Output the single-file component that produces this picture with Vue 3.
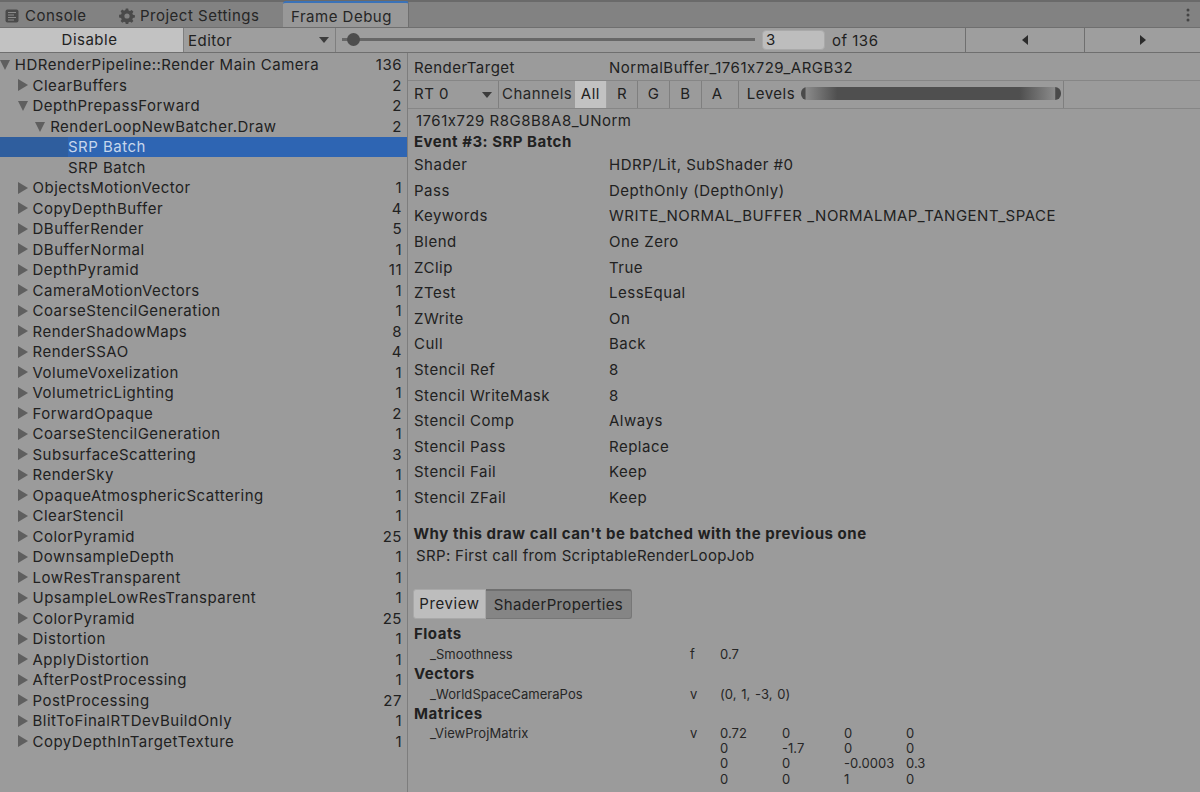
<template>
  <div class="window">
    <div class="tabbar">
      <div class="tab">
        <svg class="tab-icon" width="14" height="14" viewBox="0 0 14 14">
          <rect x="0.5" y="0.5" width="13" height="13" rx="2" fill="#4a4a4a" />
          <path d="M3 3.500h8M3 6h6M3 8.500h8M3 11h6" stroke="#8c8c8c" stroke-width="1" />
        </svg>
        Console
      </div>
      <div class="tab tab-settings">
        <svg class="tab-icon" width="16" height="16" viewBox="0 0 16 16">
          <path
            fill="#4a4a4a"
            fill-rule="evenodd"
            d="M6.800 0.500h2.400l.4 2 1.400.6 1.700-1.100 1.700 1.700-1.100 1.700.6 1.400 2 .4v2.400l-2 .4-.6 1.400 1.100 1.700-1.700 1.700-1.700-1.100-1.400.6-.4 2H6.800l-.4-2-1.400-.6-1.700 1.100-1.700-1.700 1.100-1.700-.6-1.400-2-.4V6.800l2-.4.6-1.400-1.100-1.700 1.700-1.700 1.700 1.100 1.400-.6zM8 5.400a2.600 2.600 0 1 0 0 5.200 2.600 2.600 0 0 0 0-5.200z"
          />
        </svg>
        Project Settings
      </div>
      <div class="tab tab-active">Frame Debug</div>
      <div class="tab-rest">
        <svg width="4" height="14" viewBox="0 0 4 14">
          <circle cx="2" cy="2" r="1.500" fill="#444" />
          <circle cx="2" cy="7" r="1.500" fill="#444" />
          <circle cx="2" cy="12" r="1.500" fill="#444" />
        </svg>
      </div>
    </div>

    <div class="toolbar">
      <div class="disable-btn">Disable</div>
      <div class="editor-select">Editor<span class="caret"></span></div>
      <div class="slider">
        <div class="slider-track"></div>
        <div class="slider-thumb"></div>
      </div>
      <div class="frame-input">3</div>
      <div class="frame-total">of 136</div>
      <div class="nav-btn"><span class="arrow-left"></span></div>
      <div class="nav-btn"><span class="arrow-right"></span></div>
    </div>

    <div class="main">
      <div class="tree">
        <div
          v-for="row in treeRows"
          :key="row.id"
          class="tree-row"
          :class="{ selected: row.selected }"
          :style="{ paddingLeft: row.depth * 17.7 + 14.8 + 'px' }"
        >
          <span v-if="row.selected" class="tree-gutter"></span>
          <span v-if="row.arrow" class="tree-arrow" :class="row.arrow"></span>
          <span class="tree-name">{{ row.name }}</span>
          <span class="tree-count">{{ row.count }}</span>
        </div>
      </div>

      <div class="details">
        <div class="target-row">
          <span class="target-label">RenderTarget</span>
          <span>NormalBuffer_1761x729_ARGB32</span>
        </div>
        <div class="channels">
          <div class="rt-select">RT 0<span class="caret"></span></div>
          <div class="channels-label">Channels</div>
          <div class="channel on">All</div>
          <div class="channel">R</div>
          <div class="channel">G</div>
          <div class="channel">B</div>
          <div class="channel channel-last">A</div>
          <div class="levels">
            <span>Levels</span>
            <div class="levels-bar"></div>
          </div>
        </div>
        <div class="format">1761x729 R8G8B8A8_UNorm</div>
        <div class="event-title">Event #3: SRP Batch</div>
        <div class="props">
          <div v-for="prop in props" :key="prop[0]" class="prop">
            <span class="prop-name">{{ prop[0] }}</span>
            <span>{{ prop[1] }}</span>
          </div>
        </div>
        <div class="why-title">Why this draw call can't be batched with the previous one</div>
        <div class="why-text">SRP: First call from ScriptableRenderLoopJob</div>

        <div class="segmented">
          <div class="segment seg-on">Preview</div>
          <div class="segment seg-off">ShaderProperties</div>
        </div>

        <div class="group-title">Floats</div>
        <div class="shader-row">
          <span class="sp-name">_Smoothness</span><span class="sp-type">f</span><span>0.7</span>
        </div>
        <div class="group-title">Vectors</div>
        <div class="shader-row">
          <span class="sp-name">_WorldSpaceCameraPos</span><span class="sp-type">v</span><span class="sp-vector">(0, 1, -3, 0)</span>
        </div>
        <div class="group-title">Matrices</div>
        <div class="shader-row matrix-row">
          <span class="sp-name">_ViewProjMatrix</span><span class="sp-type">v</span>
          <div class="matrix">
            <span v-for="(cell, i) in matrix" :key="i">{{ cell }}</span>
          </div>
        </div>
      </div>
    </div>
  </div>
</template>

<script setup>
const names = [
  ['ClearBuffers', 2],
  ['DepthPrepassForward', 2, 'open'],
  ['RenderLoopNewBatcher.Draw', 2, 'open', 2],
  ['SRP Batch', '', '', 3, true],
  ['SRP Batch', '', '', 3],
  ['ObjectsMotionVector', 1],
  ['CopyDepthBuffer', 4],
  ['DBufferRender', 5],
  ['DBufferNormal', 1],
  ['DepthPyramid', 11],
  ['CameraMotionVectors', 1],
  ['CoarseStencilGeneration', 1],
  ['RenderShadowMaps', 8],
  ['RenderSSAO', 4],
  ['VolumeVoxelization', 1],
  ['VolumetricLighting', 1],
  ['ForwardOpaque', 2],
  ['CoarseStencilGeneration', 1],
  ['SubsurfaceScattering', 3],
  ['RenderSky', 1],
  ['OpaqueAtmosphericScattering', 1],
  ['ClearStencil', 1],
  ['ColorPyramid', 25],
  ['DownsampleDepth', 1],
  ['LowResTransparent', 1],
  ['UpsampleLowResTransparent', 1],
  ['ColorPyramid', 25],
  ['Distortion', 1],
  ['ApplyDistortion', 1],
  ['AfterPostProcessing', 1],
  ['PostProcessing', 27],
  ['BlitToFinalRTDevBuildOnly', 1],
  ['CopyDepthInTargetTexture', 1],
]

const treeRows = [
  { id: 0, name: 'HDRenderPipeline::Render Main Camera', count: 136, arrow: 'open', depth: 0 },
  ...names.map((n, i) => ({
    id: i + 1,
    name: n[0],
    count: n[1],
    arrow: n[2] === '' ? '' : n[2] || 'closed',
    depth: n[3] || 1,
    selected: !!n[4],
  })),
]

const props = [
  ['Shader', 'HDRP/Lit, SubShader #0'],
  ['Pass', 'DepthOnly (DepthOnly)'],
  ['Keywords', 'WRITE_NORMAL_BUFFER _NORMALMAP_TANGENT_SPACE'],
  ['Blend', 'One Zero'],
  ['ZClip', 'True'],
  ['ZTest', 'LessEqual'],
  ['ZWrite', 'On'],
  ['Cull', 'Back'],
  ['Stencil Ref', '8'],
  ['Stencil WriteMask', '8'],
  ['Stencil Comp', 'Always'],
  ['Stencil Pass', 'Replace'],
  ['Stencil Fail', 'Keep'],
  ['Stencil ZFail', 'Keep'],
]

const matrix = [
  '0.72', '0', '0', '0',
  '0', '-1.7', '0', '0',
  '0', '0', '-0.0003', '0.3',
  '0', '0', '1', '0',
]
</script>

<style>
html,
body {
  margin: 0;
  background: #9b9b9b;
}
</style>

<style scoped>
.window {
  width: 1200px;
  height: 792px;
  overflow: hidden;
  background: #9b9b9b;
  color: #212121;
  font-family: Inter, "Liberation Sans", sans-serif;
  font-size: 15px;
  letter-spacing: 0.5px;
  display: flex;
  flex-direction: column;
}

.tabbar {
  height: 25px;
  flex: none;
  display: flex;
  background: #828282;
  border-top: 2px solid #6a6a6a;
  color: #262626;
}
.tab {
  display: flex;
  align-items: center;
  gap: 6px;
  padding: 2px 0 0 5px;
  width: 100px;
  box-sizing: border-box;
}
.tab-settings {
  width: 183px;
  padding-left: 19px;
  gap: 5px;
}
.tab-active {
  width: 126px;
  padding-left: 8px;
  background: #989898;
  border-top: 2px solid #3a72b8;
  border-right: 1px solid #6f6f6f;
  border-radius: 3px 3px 0 0;
  margin-top: -1px;
}
.tab-rest {
  flex: 1;
  display: flex;
  justify-content: flex-end;
  align-items: center;
  padding-right: 10px;
}

.toolbar {
  height: 26px;
  flex: none;
  display: flex;
  align-items: stretch;
  background: #9e9e9e;
  border-top: 1px solid #6f6f6f;
  border-bottom: 1px solid #6f6f6f;
  box-sizing: border-box;
}
.toolbar > div {
  flex: none;
}
.disable-btn {
  width: 183px;
  background: #c2c2c2;
  display: flex;
  align-items: center;
  justify-content: center;
  padding: 0 4px 1px 0;
  box-sizing: border-box;
}
.editor-select {
  width: 153px;
  position: relative;
  display: flex;
  align-items: center;
  padding-left: 4px;
  box-sizing: border-box;
  border-left: 1px solid #7f7f7f;
  border-right: 1px solid #7f7f7f;
}
.caret {
  position: absolute;
  right: 6px;
  top: 50%;
  margin-top: -3px;
  border-left: 5px solid transparent;
  border-right: 5px solid transparent;
  border-top: 6px solid #3c3c3c;
}
.slider {
  width: 419px;
  position: relative;
  margin-left: 6px;
}
.slider-track {
  position: absolute;
  left: 0;
  right: 6px;
  top: 50%;
  height: 3px;
  margin-top: -2px;
  background: #676767;
}
.slider-thumb {
  position: absolute;
  left: 5px;
  top: 50%;
  width: 13px;
  height: 13px;
  margin-top: -7px;
  border-radius: 50%;
  background: #4d4d4d;
}
.frame-input {
  width: 63px;
  height: 20px;
  align-self: center;
  margin-left: 1px;
  padding-left: 3px;
  box-sizing: border-box;
  background: #bdbdbd;
  border: 1px solid #a9a9a9;
  border-radius: 4px;
  line-height: 18px;
}
.frame-total {
  width: 140px;
  padding-left: 7px;
  box-sizing: border-box;
  display: flex;
  align-items: center;
}
.nav-btn {
  width: 118.500px;
  display: flex;
  align-items: center;
  justify-content: center;
  border-left: 1px solid #6f6f6f;
  box-sizing: border-box;
}
.arrow-left {
  border-top: 5px solid transparent;
  border-bottom: 5px solid transparent;
  border-right: 6px solid #2c2c2c;
}
.arrow-right {
  border-top: 5px solid transparent;
  border-bottom: 5px solid transparent;
  border-left: 6px solid #2c2c2c;
}

.main {
  flex: 1;
  display: flex;
  min-height: 0;
}
.tree {
  width: 407px;
  flex: none;
  padding-top: 1.500px;
  border-right: 1px solid #7d7d7d;
}
.tree-row {
  height: 20.500px;
  display: flex;
  align-items: center;
  position: relative;
  padding-right: 5px;
  line-height: 1;
}
.tree-row.selected {
  background: #2e65b3;
  color: #c6d6ec;
}
.tree-gutter {
  position: absolute;
  left: 0;
  top: 0;
  bottom: 0;
  width: 68px;
  background: #2f5e9e;
}
.tree-name {
  flex: 1;
  white-space: nowrap;
  position: relative;
}
.tree-count {
  text-align: right;
}
.tree-arrow {
  position: absolute;
}
.tree-arrow.closed {
  border-top: 6px solid transparent;
  border-bottom: 6px solid transparent;
  border-left: 10px solid #5f5f5f;
  margin-left: -14.500px;
}
.tree-arrow.open {
  border-left: 5px solid transparent;
  border-right: 5px solid transparent;
  border-top: 10px solid #5f5f5f;
  margin-left: -15px;
  margin-top: 1px;
}

.details {
  flex: 1;
  min-width: 0;
}
.target-row {
  padding: 2px 0 0 6px;
  height: 25px;
  display: flex;
  align-items: center;
  border-bottom: 1px solid #868686;
}
.target-label {
  width: 195px;
  flex: none;
}
.channels {
  height: 27px;
  display: flex;
  align-items: stretch;
  border-bottom: 1px solid #868686;
}
.channels > div {
  display: flex;
  align-items: center;
  padding-bottom: 2px;
}
.rt-select {
  width: 91px;
  flex: none;
  padding-left: 6px;
  box-sizing: border-box;
  position: relative;
  border-right: 1px solid #7f7f7f;
}
.channels-label {
  width: 76px;
  padding-left: 3px;
  box-sizing: border-box;
  color: #262626;
}
.channel {
  width: 31.700px;
  box-sizing: border-box;
  justify-content: center;
  border-right: 1px solid #7f7f7f;
}
.channel.on {
  background: #c2c2c2;
  border-right: 1px solid #a0a0a0;
}
.channels > .channel-last {
  width: 37px;
  padding-right: 5px;
}
.levels {
  width: 325px;
  gap: 6px;
  padding-left: 8px;
  box-sizing: border-box;
  border-right: 1px solid #7f7f7f;
}
.levels-bar {
  flex: 1;
  height: 13px;
  margin-right: 2px;
  border-radius: 6px;
  background: linear-gradient(90deg, #4a4a4a 0, #4a4a4a 1.500%, #8a8a8a 2%, #4f4f4f 14%, #4f4f4f 84%, #8a8a8a 97.500%, #4a4a4a 98%);
}
.format {
  height: 22px;
  padding-left: 8px;
  line-height: 24px;
}
.event-title {
  height: 21px;
  padding-left: 6px;
  line-height: 21px;
  font-weight: 700;
}
.prop {
  height: 25.600px;
  display: flex;
  align-items: center;
  padding-left: 6px;
  white-space: nowrap;
}
.prop-name {
  width: 195px;
  flex: none;
}
.why-title {
  margin-top: 12.500px;
  height: 22px;
  line-height: 22px;
  padding-left: 5.500px;
  font-weight: 700;
  letter-spacing: 0.55px;
}
.why-text {
  height: 22px;
  line-height: 22px;
  padding-left: 8px;
  letter-spacing: 0.34px;
}
.segmented {
  display: flex;
  margin: 22px 0 0 5px;
  width: 219px;
  height: 30px;
}
.segment {
  display: flex;
  align-items: center;
  justify-content: center;
  box-sizing: border-box;
}
.seg-on {
  width: 73px;
  background: #bdbdbd;
  border-radius: 3px 0 0 3px;
  border: 1px solid #a8a8a8;
  letter-spacing: 0.6px;
}
.seg-off {
  flex: 1;
  background: #858585;
  border-top: 2px solid #6f6f6f;
  border-bottom: 1px solid #777;
  border-right: 1px solid #777;
  border-radius: 0 3px 3px 0;
  letter-spacing: 0.35px;
}
.group-title {
  height: 20px;
  line-height: 20px;
  padding-left: 6px;
  font-weight: 700;
}
.segmented + .group-title {
  margin-top: 5px;
}
.shader-row {
  display: flex;
  height: 20px;
  align-items: center;
  font-size: 13px;
  letter-spacing: 0.05px;
  color: #262626;
  white-space: nowrap;
}
.sp-name {
  width: 282px;
  padding-left: 22px;
  box-sizing: border-box;
  flex: none;
}
.sp-type {
  width: 30px;
  flex: none;
}
.sp-vector {
  word-spacing: 1px;
}
.matrix-row {
  align-items: flex-start;
  height: auto;
  line-height: 15.300px;
  padding-top: 2px;
}
.matrix {
  display: grid;
  grid-template-columns: 62px 62px 62px 40px;
}
</style>
